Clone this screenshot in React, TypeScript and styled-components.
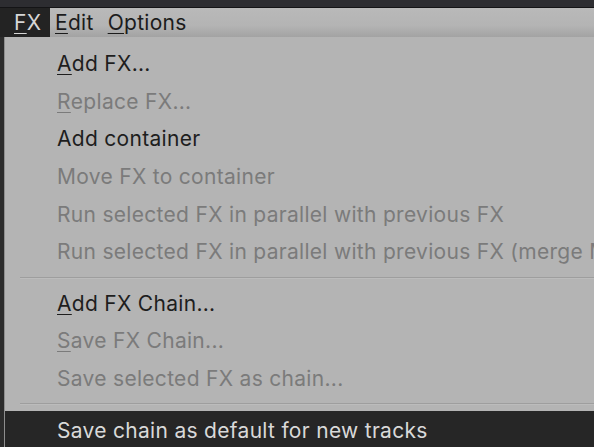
import React from 'react';
import styled, { createGlobalStyle } from 'styled-components';

const Global = createGlobalStyle`
  html, body {
    margin: 0;
    padding: 0;
    width: 594px;
    height: 447px;
    overflow: hidden;
    background: #2b2b2d;
  }
`;

const Screen = styled.div`
  width: 594px;
  height: 447px;
  display: flex;
  flex-direction: column;
  font-family: Inter, "Noto Sans", sans-serif;
  font-size: 21px;
  letter-spacing: 0.3px;
  overflow: hidden;
`;

const TitleStrip = styled.div`
  height: 7px;
  flex-shrink: 0;
  background: #2d2d31;
  border-bottom: 1px solid #141416;
`;

const MenuBar = styled.div`
  display: flex;
  height: 29px;
  flex-shrink: 0;
  align-items: stretch;
  background: linear-gradient(#2a2a2a, #2a2a2a) left / 6px 100% no-repeat,
    linear-gradient(#b9b9b9 0%, #b4b4b4 60%, #a3a3a3 100%);
`;

const BarItem = styled.div<{ $active?: boolean }>`
  display: flex;
  align-items: center;
  padding: 0 0 0 ${p => (p.$active ? '14px' : '5px')};
  margin-right: ${p => (p.$active ? '0' : '9px')};
  width: ${p => (p.$active ? '50px' : 'auto')};
  box-sizing: border-box;
  background: ${p => (p.$active ? '#232323' : 'transparent')};
  color: ${p => (p.$active ? '#d6d6d6' : '#1c1c1c')};
  line-height: 1;
`;

const Body = styled.div`
  flex: 1;
  display: flex;
`;

const Gutter = styled.div`
  width: 4px;
  flex-shrink: 0;
  background: #2c2c2c;
`;

const Popup = styled.div`
  flex: 1;
  min-width: 0;
  background: #b4b4b4;
  border-left: 1px solid #8e8e8e;
  padding-top: 8px;
  display: flex;
  flex-direction: column;
  overflow: hidden;
`;

const Item = styled.div<{ $disabled?: boolean; $hot?: boolean }>`
  height: 37.6px;
  flex-shrink: 0;
  display: flex;
  align-items: center;
  padding-left: 52px;
  white-space: nowrap;
  color: ${p => (p.$hot ? '#d9d9d9' : p.$disabled ? '#7b7b7b' : '#1e1e1e')};
  background: ${p => (p.$hot ? '#262626' : 'transparent')};
`;

const Separator = styled.div`
  height: 1px;
  flex-shrink: 0;
  margin: 6px 0 6px 15px;
  background: #9e9e9e;
  border-bottom: 1px solid #bcbcbc;
`;

const Key = styled.span`
  text-decoration: underline;
  text-decoration-thickness: 1px;
  text-underline-offset: 3px;
`;

export default function App() {
  return (
    <>
      <Global />
      <Screen>
        <TitleStrip />
        <MenuBar>
          <BarItem $active><Key>F</Key>X</BarItem>
          <BarItem><Key>E</Key>dit</BarItem>
          <BarItem><Key>O</Key>ptions</BarItem>
        </MenuBar>
        <Body>
          <Gutter />
          <Popup>
            <Item><Key>A</Key>dd FX...</Item>
            <Item $disabled><Key>R</Key>eplace FX...</Item>
            <Item>Add container</Item>
            <Item $disabled>Move FX to container</Item>
            <Item $disabled>Run selected FX in parallel with previous FX</Item>
            <Item $disabled>Run selected FX in parallel with previous FX (merge MIDI)</Item>
            <Separator />
            <Item><Key>A</Key>dd FX Chain...</Item>
            <Item $disabled><Key>S</Key>ave FX Chain...</Item>
            <Item $disabled>Save selected FX as chain...</Item>
            <Separator />
            <Item $hot>Save chain as default for new tracks</Item>
          </Popup>
        </Body>
      </Screen>
    </>
  );
}
